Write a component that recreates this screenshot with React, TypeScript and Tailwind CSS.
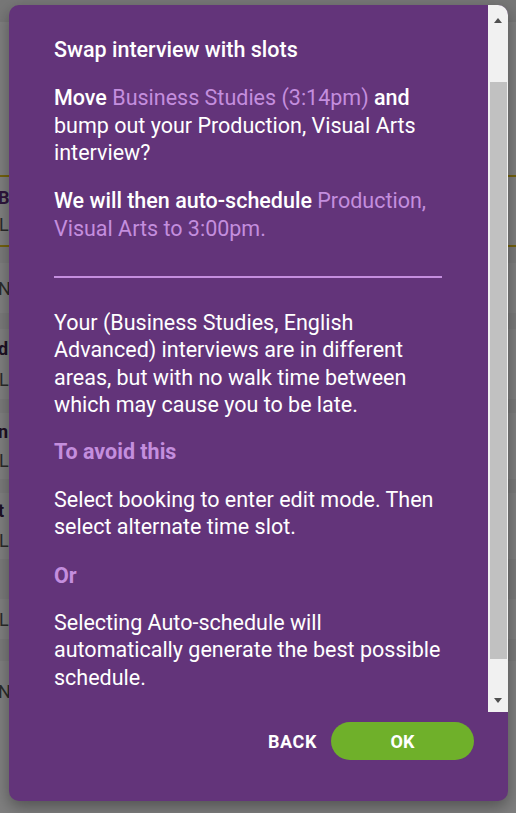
import type { ReactNode } from "react";

const accent = "text-[#c48ede]";

function Para({ children, className = "" }: { children: ReactNode; className?: string }) {
  return <p className={`mb-[19.5px] ${className}`}>{children}</p>;
}

function BackgroundPage() {
  return (
    <div className="flex h-[813px] flex-col bg-white text-[18px] text-[#555]">
      <div className="h-[22px] bg-[#eeeeee]" />
      <div className="flex h-[88px] items-end" />
      <div className="flex h-[65px] items-center justify-end font-medium text-[#333]">
        <span className="mr-[-14px]">D</span>
      </div>
      <div className="flex h-[72px] flex-col justify-center border-y-2 border-[#e6c21a]">
        <span className="-ml-[2px] font-bold text-[#5d2b78]">Business</span>
        <span className="-ml-[1px]">Library</span>
      </div>
      <div className="h-[16px] bg-[#f4f4f4]" />
      <div className="flex h-[50px] items-center">
        <span className="-ml-[2px]">N</span>
      </div>
      <div className="h-[16px] bg-[#f4f4f4]" />
      <div className="flex h-[70px] flex-col justify-center leading-[31px]">
        <span className="-ml-[2px] font-bold text-[#3a2046]">d</span>
        <span className="-ml-[1px]">L</span>
      </div>
      <div className="h-[14px] bg-[#f4f4f4]" />
      <div className="flex h-[66px] flex-col justify-center leading-[29px]">
        <span className="-ml-[2px] font-bold text-[#3a2046]">n</span>
        <span className="-ml-[1px]">Li</span>
      </div>
      <div className="h-[14px] bg-[#f4f4f4]" />
      <div className="flex h-[66px] flex-col justify-center leading-[30px]">
        <span className="-ml-[2px] font-bold text-[#3a2046]">t</span>
        <span className="-ml-[1px]">L</span>
      </div>
      <div className="h-[40px] bg-[#f4f4f4]" />
      <div className="flex h-[40px] items-center">
        <span className="-ml-[1px]">Li</span>
      </div>
      <div className="h-[22px] bg-[#f4f4f4]" />
      <div className="flex h-[60px] items-center">
        <span className="-ml-[2px]">N</span>
      </div>
    </div>
  );
}

function FakeScrollbar() {
  return (
    <div className="flex w-[20px] shrink-0 flex-col rounded-tr-[10px] bg-[#f1f1f1]">
      <div className="flex h-[77px] justify-center pt-[13px]">
        <div className="h-0 w-0 border-x-[4px] border-b-[5px] border-x-transparent border-b-[#505050]" />
      </div>
      <div className="ml-[2px] mr-[1px] h-[577px] bg-[#c1c1c1]" />
      <div className="flex flex-1 justify-center pt-[39px]">
        <div className="h-0 w-0 border-x-[4px] border-t-[5px] border-x-transparent border-t-[#505050]" />
      </div>
    </div>
  );
}

export default function App() {
  return (
    <div className="relative h-[813px] w-[516px] overflow-hidden font-['Roboto',sans-serif]">
      <BackgroundPage />
      <div className="absolute inset-0 bg-black/50" />

      <div className="absolute left-[9px] top-[5px] flex h-[796px] w-[499px] flex-col rounded-[10px] bg-[#63347a] shadow-[0_6px_16px_rgba(0,0,0,0.35)]">
        <div className="flex h-[707px]">
          <div className="flex-1 overflow-hidden pl-[45px] pr-[43px] pt-[30.5px] text-[21.5px] leading-[27.6px] text-white">
            <p className="mb-[21px] font-medium">Swap interview with slots</p>
            <Para className="mb-[20.5px]">
              <span className="font-medium">Move</span> <span className={accent}>Business Studies (3:14pm)</span>{" "}
              <span className="font-medium">and</span> bump out your Production, Visual Arts interview?
            </Para>
            <Para>
              <span className="font-medium">We will then auto-schedule</span>{" "}
              <span className={accent}>Production, Visual Arts to 3:00pm.</span>
            </Para>
            <div className="mb-[31px] mr-[3px] mt-[33px] h-[2px] bg-[#c48ede]" />
            <Para>
              Your (Business Studies, English Advanced) interviews are in different areas, but with no walk time
              between which may cause you to be late.
            </Para>
            <Para className={`font-bold ${accent}`}>To avoid this</Para>
            <Para>Select booking to enter edit mode. Then select alternate time slot.</Para>
            <p className={`mb-[19.5px] mt-[21px] font-bold ${accent}`}>Or</p>
            <Para>Selecting Auto-schedule will automatically generate the best possible schedule.</Para>
          </div>
          <FakeScrollbar />
        </div>

        <div className="flex items-start justify-end gap-[14px] pr-[34px] pt-[10px]">
          <button
            type="button"
            className="h-[38px] text-[18px] font-bold uppercase tracking-[0.6px] text-white"
          >
            Back
          </button>
          <button
            type="button"
            className="h-[38px] w-[143px] rounded-full bg-[#6fb02a] text-[18px] font-bold uppercase text-white"
          >
            OK
          </button>
        </div>
      </div>
    </div>
  );
}
